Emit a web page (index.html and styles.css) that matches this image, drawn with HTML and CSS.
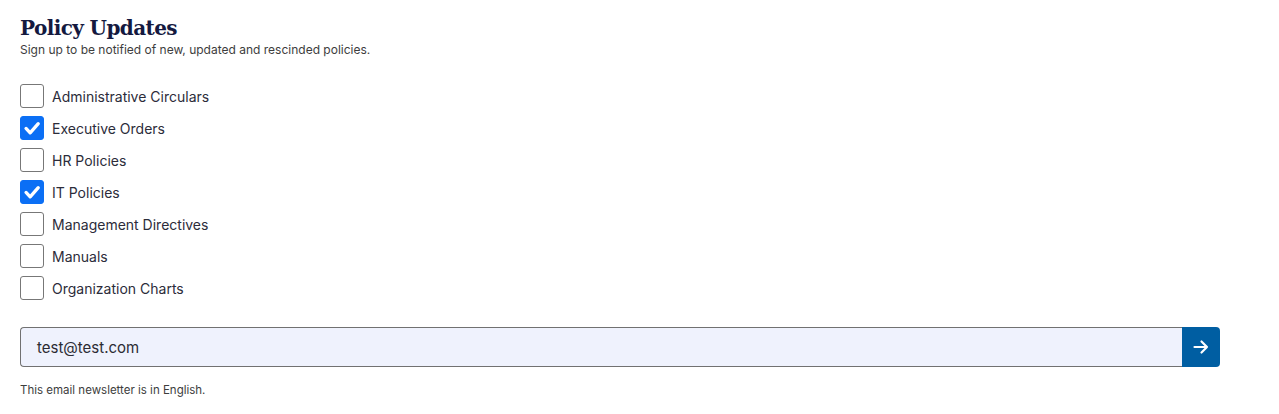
FILE: index.html
```html
<!DOCTYPE html>
<html lang="en">
<head>
<meta charset="utf-8">
<title>Policy Updates</title>
<link rel="stylesheet" href="styles.css">
</head>
<body>
<section class="signup">
  <h2 class="title">Policy Updates</h2>
  <p class="subtitle">Sign up to be notified of new, updated and rescinded policies.</p>
  <ul class="options">
    <li class="option"><span class="box"></span><span class="label">Administrative Circulars</span></li>
    <li class="option"><span class="box checked"><svg viewBox="0 0 24 24" width="24" height="24"><path d="M5.5 12.5l4.5 4.8 8.8-10" fill="none" stroke="#fff" stroke-width="3.6" stroke-linecap="round" stroke-linejoin="round"/></svg></span><span class="label">Executive Orders</span></li>
    <li class="option"><span class="box"></span><span class="label">HR Policies</span></li>
    <li class="option"><span class="box checked"><svg viewBox="0 0 24 24" width="24" height="24"><path d="M5.5 12.5l4.5 4.8 8.8-10" fill="none" stroke="#fff" stroke-width="3.6" stroke-linecap="round" stroke-linejoin="round"/></svg></span><span class="label">IT Policies</span></li>
    <li class="option"><span class="box"></span><span class="label">Management Directives</span></li>
    <li class="option"><span class="box"></span><span class="label">Manuals</span></li>
    <li class="option"><span class="box"></span><span class="label">Organization Charts</span></li>
  </ul>
  <form class="email-row">
    <div class="email-field">test@test.com</div>
    <button class="submit" type="button" aria-label="Subscribe"><svg viewBox="0 0 16 16" width="16" height="16"><path d="M1.5 8h12.5M8.5 2.5L14 8l-5.5 5.5" fill="none" stroke="#fff" stroke-width="2.2" stroke-linecap="round" stroke-linejoin="round"/></svg></button>
  </form>
  <p class="note">This email newsletter is in English.</p>
</section>
</body>
</html>
```
FILE: styles.css
```css
html, body {
  margin: 0;
  padding: 0;
  background: #ffffff;
}
body {
  font-family: Inter, "Noto Sans", sans-serif;
  color: #1b1b1b;
}
.signup {
  padding: 14px 59px 0 20px;
}
.title {
  margin: 0;
  font-family: "DejaVu Serif", "Liberation Serif", serif;
  font-weight: 700;
  font-size: 20px;
  line-height: 28px;
  color: #14193f;
  letter-spacing: -0.6px;
}
.subtitle {
  margin: 0;
  font-size: 12px;
  line-height: 16px;
  color: #3d3d3d;
}
.options {
  list-style: none;
  margin: 26px 0 0;
  padding: 0;
  display: flex;
  flex-direction: column;
  gap: 8px;
}
.option {
  display: flex;
  align-items: center;
  gap: 8px;
  height: 24px;
}
.box {
  box-sizing: border-box;
  width: 24px;
  height: 24px;
  border: 1px solid #777777;
  border-radius: 3px;
  background: #ffffff;
  display: flex;
  align-items: center;
  justify-content: center;
}
.box.checked {
  background: #0b6ff5;
  border-color: #0b6ff5;
}
.label {
  font-size: 14px;
  color: #2c2c3a;
}
.email-row {
  display: flex;
  margin: 27px 0 0;
  height: 40px;
}
.email-field {
  flex: 1;
  box-sizing: border-box;
  height: 40px;
  background: #eff2fd;
  border: 1px solid #717171;
  border-right: none;
  border-radius: 4px 0 0 4px;
  padding: 0 16px;
  display: flex;
  align-items: center;
  font-size: 15px;
  color: #2b2b33;
}
.submit {
  width: 38px;
  height: 40px;
  border: none;
  padding: 0;
  background: #005ea2;
  border-radius: 0 4px 4px 0;
  display: flex;
  align-items: center;
  justify-content: center;
}
.note {
  margin: 15px 0 0;
  font-size: 11.5px;
  line-height: 16px;
  color: #3d3d3d;
}
```
